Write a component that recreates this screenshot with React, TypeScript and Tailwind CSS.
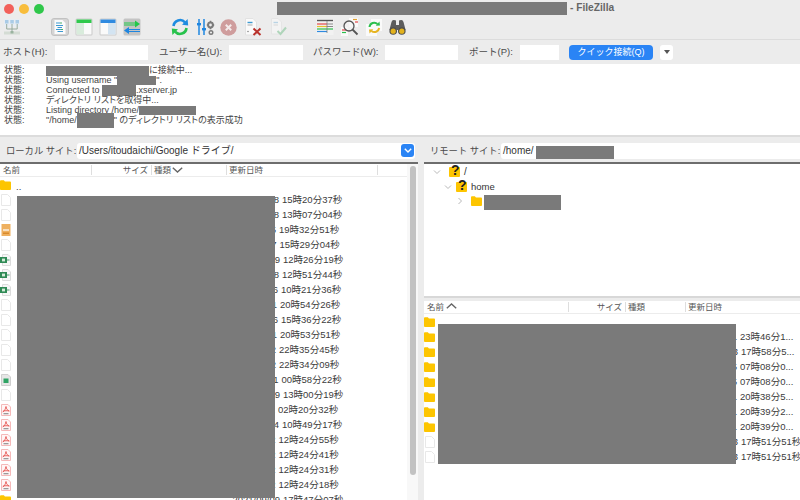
import React from "react";

const Redact = ({ c }: { c: string }) => <div className={`absolute bg-[#7a7a7a] ${c}`} />;

const Folder = () => (
  <svg width="11" height="10" viewBox="0 0 12 10" preserveAspectRatio="none" className="shrink-0">
    <path d="M0 1.2Q0 .2 1 .2H4.2L5.4 1.4H11Q12 1.4 12 2.4V9Q12 10 11 10H1Q0 10 0 9Z" fill="#fdc500" />
  </svg>
);
const Blank = () => (
  <svg width="10" height="12" viewBox="0 0 10 12" className="shrink-0 ml-[1px]">
    <path d="M.5.5H6.5L9.5 3.5V11.5H.5Z" fill="#fff" stroke="#e8e8e8" />
  </svg>
);
const Orange = () => (
  <svg width="10" height="12" viewBox="0 0 10 12" className="shrink-0 ml-[1px]">
    <rect width="9" height="12" x=".5" fill="#eeb060" />
    <rect x="2" y="5" width="6" height="2" fill="#fff" opacity=".6" />
    <rect x="2" y="8.5" width="6" height="1.5" fill="#d98a2a" />
  </svg>
);
const Xls = () => (
  <svg width="11" height="12" viewBox="0 0 11 12" className="shrink-0">
    <path d="M2.5.5H8L10.5 3V11.5H2.5Z" fill="#f6f6f6" stroke="#dcdcdc" />
    <rect x="0" y="3" width="7" height="6" fill="#2f8a55" />
    <rect x="2" y="4.6" width="3" height="2.8" fill="#d5ead9" />
    <rect x="7" y="5.5" width="2.5" height="1" fill="#4aa070" />
  </svg>
);
const Sheet = () => (
  <svg width="10" height="12" viewBox="0 0 10 12" className="shrink-0 ml-[1px]">
    <path d="M.5.5H7L9.5 3V11.5H.5Z" fill="#e6e6e6" stroke="#cfcfcf" />
    <rect x="2.5" y="4.5" width="5" height="4.5" fill="#2fa364" />
  </svg>
);
const Pdf = () => (
  <svg width="10" height="12" viewBox="0 0 10 12" className="shrink-0 ml-[1px]">
    <path d="M.5.5H7L9.5 3V11.5H.5Z" fill="#fff5f5" stroke="#f5b9b9" />
    <path d="M5 2.5C4.5 5 3.5 7 1.8 8M5 2.5C5.3 5 6.5 6.5 8.3 7M1.8 7.2C4 6.6 6 6.6 8.3 7" fill="none" stroke="#e5544f" strokeWidth=".9" />
    <rect x="2.5" y="9" width="5" height="1.3" fill="#999" />
  </svg>
);
const Question = () => (
  <div className="w-[11px] h-[10px] bg-[#fdc500] rounded-[1px] relative shrink-0">
    <span className="absolute left-[2px] -top-[5px] text-[14px] leading-[16px] font-bold text-[#222]">?</span>
  </div>
);

const Chevron = ({ d, c }: { d: string; c: string }) => (
  <svg width="8" height="8" viewBox="0 0 8 8" className={`shrink-0 ${c}`}>
    <path d={d} fill="none" stroke="#b9b9b9" strokeWidth="1" />
  </svg>
);

/* toolbar icons */
const SiteIcon = () => (
  <svg width="18" height="18" viewBox="0 0 18 18">
    <rect x="1" y="1" width="16" height="8" fill="#e7edf3" />
    <rect x="2" y="2" width="3.5" height="3.5" fill="#a9cbe6" />
    <rect x="7.3" y="2" width="3.5" height="3.5" fill="#a9cbe6" />
    <rect x="12.5" y="2" width="3.5" height="3.5" fill="#a9cbe6" />
    <path d="M3.7 6V11H14.2V6M9 6V14" stroke="#8fa596" strokeWidth=".9" fill="none" />
    <rect x="1" y="13.5" width="16" height="3" fill="#d4dcd4" />
    <rect x="7.5" y="13" width="3" height="2.5" fill="#9ab39f" />
  </svg>
);
const LogIcon = () => (
  <svg width="18" height="18" viewBox="0 0 18 18">
    <rect x=".5" y=".5" width="17" height="17" rx="2.5" fill="#d5d5d5" stroke="#c2c2c2" />
    <path d="M3.5 2H11.5L14.5 5V16H3.5Z" fill="#fbfbfb" />
    <path d="M5 5H9M5 7.5H12M6.5 9.5H11M5 11.5H10M6.5 13.5H12" stroke="#3d9ad1" strokeWidth="1" />
    <path d="M9 5H11M10 11.5H12" stroke="#45ad68" strokeWidth="1" />
  </svg>
);
const PaneIcon = ({ top, side, right }: { top: string; side: string; right?: boolean }) => (
  <svg width="18" height="18" viewBox="0 0 18 18">
    <rect x=".5" y=".5" width="17" height="17" rx="1.5" fill="#c9c9c9" />
    <rect x="1.5" y="1.5" width="15" height="15" fill="#fafafa" />
    <rect x="1.5" y="1.5" width="15" height="3.5" fill={top} />
    {right ? (
      <rect x="9" y="5" width="7.5" height="11.5" fill={side} />
    ) : (
      <rect x="1.5" y="5" width="7.5" height="11.5" fill={side} />
    )}
  </svg>
);
const TransferIcon = () => (
  <svg width="18" height="18" viewBox="0 0 18 18">
    <rect x=".5" y=".5" width="17" height="17" rx="1.5" fill="#c4c4c4" />
    <path d="M1 5H13M1 7H13" stroke="#23c84a" strokeWidth="1.2" />
    <path d="M12 2.5L17 6L12 9.5Z" fill="#23c84a" />
    <path d="M5 11.5H17M5 13.5H17" stroke="#1f86e0" strokeWidth="1.2" />
    <path d="M6 9L1 12.5L6 16Z" fill="#1f86e0" />
  </svg>
);
const RefreshIcon = () => (
  <svg width="18" height="18" viewBox="0 0 18 18">
    <path d="M2.5 8A6.6 6.6 0 0 1 14 4.3" fill="none" stroke="#1e8ce0" strokeWidth="2.6" />
    <path d="M11 6.8L17.2 7.4L16.6 1Z" fill="#1e8ce0" />
    <path d="M15.5 10A6.6 6.6 0 0 1 4 13.7" fill="none" stroke="#27c24c" strokeWidth="2.6" />
    <path d="M7 11.2L.8 10.6L1.4 17Z" fill="#27c24c" />
  </svg>
);
const QueueIcon = () => (
  <svg width="22" height="18" viewBox="0 0 22 18">
    <path d="M3 1V17M8 1V17" stroke="#1f86e0" strokeWidth="1.5" />
    <rect x="1" y="5" width="4" height="2.4" fill="#1f86e0" />
    <rect x="6" y="10" width="4" height="2.4" fill="#1f86e0" />
    <circle cx="14.5" cy="7" r="2.4" fill="none" stroke="#7a7a7a" strokeWidth="2" />
    <path d="M14.5 2.8V4M14.5 10V11.2M10.8 7H12M17 7H18.2" stroke="#7a7a7a" strokeWidth="1.6" />
    <circle cx="15" cy="14.5" r="1.8" fill="none" stroke="#7a7a7a" strokeWidth="1.4" />
  </svg>
);
const CancelIcon = () => (
  <svg width="17" height="17" viewBox="0 0 17 17">
    <circle cx="8.5" cy="8.5" r="8.2" fill="#cf9d9d" />
    <path d="M5.8 5.8L11.2 11.2M11.2 5.8L5.8 11.2" stroke="#f4eaea" strokeWidth="2" />
  </svg>
);
const DocX = () => (
  <svg width="18" height="18" viewBox="0 0 18 18">
    <path d="M1.5.5H9L12.5 4V17H1.5Z" fill="#fafafa" stroke="#e2e2e2" />
    <path d="M3.5 4.5H8.5" stroke="#3d9ad1" strokeWidth="1.4" />
    <path d="M3.5 7H8.5" stroke="#aaa" strokeWidth="1" />
    <circle cx="4" cy="13.5" r=".8" fill="#888" />
    <path d="M9.5 10.5L16.5 17M16.5 10.5L9.5 17" stroke="#b9322c" strokeWidth="2" />
  </svg>
);
const DocCheck = () => (
  <svg width="18" height="18" viewBox="0 0 18 18" opacity=".65">
    <path d="M2.5.5H9L12.5 4V16H2.5Z" fill="#f8f8f8" stroke="#e2e2e2" />
    <path d="M4.5 4.5H9" stroke="#9fc6e0" strokeWidth="1.4" />
    <path d="M4.5 7H9" stroke="#ccc" strokeWidth="1" />
    <path d="M8.5 13L11.5 16L17 9.5" fill="none" stroke="#8fc9a0" strokeWidth="2" />
  </svg>
);
const FilterIcon = () => (
  <svg width="18" height="18" viewBox="0 0 18 18">
    <rect x=".5" y="1" width="17" height="16" fill="#f2f2f2" />
    <path d="M1 2.5H17" stroke="#555" strokeWidth="1.4" />
    <path d="M1 6H11" stroke="#e4484a" strokeWidth="1.2" />
    <path d="M1 8.5H11" stroke="#e6c22e" strokeWidth="1.2" />
    <path d="M1 11H11" stroke="#2cbf4e" strokeWidth="1.2" />
    <path d="M1 13.5H11" stroke="#2f8ae0" strokeWidth="1.2" />
    <path d="M11 6H17M11 8.5H17" stroke="#8a8a8a" strokeWidth="1" />
    <path d="M11 11H17" stroke="#2cbf4e" strokeWidth="1.2" />
    <path d="M11 3V15" stroke="#777" strokeWidth=".7" />
  </svg>
);
const SearchIcon = () => (
  <svg width="18" height="18" viewBox="0 0 18 18">
    <rect x="8" y="0" width="9" height="9" fill="#fafafa" />
    <path d="M12 1.5H16" stroke="#e0a030" strokeWidth="1.2" />
    <path d="M14 4H17" stroke="#e4484a" strokeWidth="1.2" />
    <rect x="0" y="9" width="7" height="9" fill="#fafafa" />
    <path d="M1 12H5" stroke="#e4484a" strokeWidth="1.2" />
    <path d="M1 14.5H5" stroke="#2cbf4e" strokeWidth="1.2" />
    <circle cx="8" cy="8" r="5" fill="#f3f3f3" fillOpacity=".7" stroke="#555" strokeWidth="1.3" />
    <path d="M11.5 11.5L16.5 16.5" stroke="#555" strokeWidth="1.8" />
  </svg>
);
const SyncIcon = () => (
  <svg width="17" height="17" viewBox="0 0 17 17">
    <rect x="5" y="0" width="11" height="12" fill="#fafafa" />
    <rect x="0" y="5" width="11" height="12" fill="#fafafa" />
    <path d="M3.5 8A4.8 4.8 0 0 1 11.5 5" fill="none" stroke="#2cbf4e" strokeWidth="2" />
    <path d="M9.8 6.8L14 6.6L13.4 2.6Z" fill="#2cbf4e" />
    <path d="M13.2 9A4.8 4.8 0 0 1 5.5 12" fill="none" stroke="#e6b422" strokeWidth="2" />
    <path d="M7.2 10.2L3 10.4L3.6 14.4Z" fill="#e6b422" />
  </svg>
);
const BinocIcon = () => (
  <svg width="17" height="17" viewBox="0 0 17 17">
    <path d="M2.5 3Q3 .8 5 1L7 1.5V6H10V1.5L12 1Q14 .8 14.5 3L16.6 11H.4Z" fill="#5c5c5c" />
    <circle cx="4.2" cy="12" r="3.8" fill="#4d4d4d" />
    <circle cx="12.8" cy="12" r="3.8" fill="#4d4d4d" />
    <circle cx="4.2" cy="12.2" r="2.6" fill="#e3b21c" />
    <circle cx="12.8" cy="12.2" r="2.6" fill="#e3b21c" />
    <rect x="7" y="7" width="3" height="4" fill="#5c5c5c" />
  </svg>
);

const Inline = ({ c }: { c: string }) => <span className={`inline-block align-middle bg-[#7a7a7a] ${c}`} />;

const logs: React.ReactNode[] = [
  <><Inline c="w-[103px] h-[10px]" />に接続中...</>,
  <>Using username "<Inline c="w-[39px] h-[9px]" />".</>,
  <>Connected to <Inline c="w-[34px] h-[11px]" />.xserver.jp</>,
  <>ディレクトリ リストを取得中...</>,
  <>Listing directory /home/<Inline c="w-[57px] h-[9px]" /></>,
  <>"/home/<Inline c="w-[37px] h-[15px] -my-[3px]" />" のディレクトリ リストの表示成功</>,
];

type T = [string, string, number];
const leftRows: { icon: React.ReactNode; t?: T }[] = [
  { icon: <Blank />, t: ["2021/01/18", "15時20分37秒", 282] },
  { icon: <Blank />, t: ["2021/01/18", "13時07分04秒", 282] },
  { icon: <Orange />, t: ["2021/02/05", "19時32分51秒", 279] },
  { icon: <Blank />, t: ["2021/02/07", "15時29分04秒", 279.5] },
  { icon: <Xls />, t: ["2021/03/19", "12時26分19秒", 283] },
  { icon: <Xls />, t: ["2021/03/18", "12時51分44秒", 282] },
  { icon: <Xls />, t: ["2021/03/16", "10時21分36秒", 281] },
  { icon: <Blank />, t: ["2021/04/11", "20時54分26秒", 280] },
  { icon: <Blank />, t: ["2021/04/16", "15時36分22秒", 281] },
  { icon: <Blank />, t: ["2021/04/11", "20時53分51秒", 280] },
  { icon: <Blank />, t: ["2021/05/02", "22時35分45秒", 279] },
  { icon: <Blank />, t: ["2021/05/02", "22時34分09秒", 279] },
  { icon: <Sheet />, t: ["2021/06/01", "00時58分22秒", 281.5] },
  { icon: <Blank />, t: ["2021/06/19", "13時00分19秒", 283] },
  { icon: <Pdf />, t: ["2021/07/02", "02時20分32秒", 278] },
  { icon: <Pdf />, t: ["2021/07/14", "10時49分17秒", 282] },
  { icon: <Pdf />, t: ["2021/08/02", "12時24分55秒", 278.5] },
  { icon: <Pdf />, t: ["2021/08/02", "12時24分41秒", 278.5] },
  { icon: <Pdf />, t: ["2021/08/02", "12時24分31秒", 278.5] },
  { icon: <Pdf />, t: ["2021/08/02", "12時24分18秒", 278.5] },
  { icon: <Folder />, t: ["2021/09/09", "17時47分07秒", 283] },
];
const rightRows: { icon: React.ReactNode; t?: T }[] = [
  { icon: <Folder />, t: ["2021/01/11", "23時46分1...", 740] },
  { icon: <Folder />, t: ["2021/01/13", "17時58分5...", 741] },
  { icon: <Folder />, t: ["2021/02/15", "07時08分0...", 740] },
  { icon: <Folder />, t: ["2021/02/15", "07時08分0...", 740] },
  { icon: <Folder />, t: ["2021/03/11", "20時38分5...", 740] },
  { icon: <Folder />, t: ["2021/03/11", "20時39分2...", 740] },
  { icon: <Folder />, t: ["2021/03/11", "20時39分0...", 740] },
  { icon: <Blank />, t: ["2021/04/13", "17時51分51秒", 741] },
  { icon: <Blank />, t: ["2021/04/13", "17時51分51秒", 741] },
];

const Row = ({
  icon, name, t, iconW, dateX, nameW,
}: { icon: React.ReactNode; name?: string; t?: T; iconW: string; dateX: number; nameW: string }) => (
  <div className="h-[15.03px] shrink-0 flex items-center whitespace-nowrap">
    <div className={`${iconW} flex items-center shrink-0`}>{icon}</div>
    <div className={`${nameW} shrink-0 pt-[4px]`}>{name}</div>
    {t && (
      <div className="flex">
        <span className="flex justify-end mr-[3px]" style={{ width: t[2] - dateX - 3 }}>{t[0]}</span>
        <span>{t[1]}</span>
      </div>
    )}
  </div>
);

const Sep = ({ c }: { c: string }) => <div className={`absolute top-[1px] h-[10px] w-px bg-[#dedede] ${c}`} />;

const SortChevron = ({ up, c }: { up?: boolean; c: string }) => (
  <svg width="11" height="6" viewBox="0 0 11 6" className={`absolute ${c}`}>
    <path d={up ? "M.8 5.2L5.5 1L10.2 5.2" : "M.8 .8L5.5 5L10.2 .8"} fill="none" stroke="#666" strokeWidth="1.4" />
  </svg>
);

export default function App() {
  return (
    <div className="w-[800px] h-[500px] overflow-hidden flex flex-col bg-[#ececec] text-[9.5px] leading-[12px] text-[#3c3c3c] [font-family:'Liberation_Sans','Noto_Sans_CJK_JP',sans-serif]">
      {/* title bar */}
      <div className="h-[17px] shrink-0 relative flex items-center pl-[4px] gap-[5px]">
        <div className="w-[10px] h-[10px] rounded-full bg-[#f2605a]" />
        <div className="w-[10px] h-[10px] rounded-full bg-[#f8bd3c]" />
        <div className="w-[10px] h-[10px] rounded-full bg-[#2fc74a]" />
        <Redact c="left-[277px] top-[2px] w-[290px] h-[13px]" />
        <span className="absolute left-[570px] top-[1px] text-[10.2px] leading-[13px] font-bold text-[#666]">- FileZilla</span>
      </div>
      {/* toolbar */}
      <div className="h-[23px] shrink-0 flex items-center pb-[2px] border-b border-[#dcdcdc]">
        <div className="ml-[3px]"><SiteIcon /></div>
        <div className="ml-[30px]"><LogIcon /></div>
        <div className="ml-[6px]"><PaneIcon top="#2fc94c" side="#d9ecdc" /></div>
        <div className="ml-[6px]"><PaneIcon top="#2f8ae0" side="#d3e4f2" right /></div>
        <div className="ml-[6px]"><TransferIcon /></div>
        <div className="ml-[30px]"><RefreshIcon /></div>
        <div className="ml-[7px]"><QueueIcon /></div>
        <div className="ml-[2px]"><CancelIcon /></div>
        <div className="ml-[7px]"><DocX /></div>
        <div className="ml-[7px]"><DocCheck /></div>
        <div className="ml-[29px]"><FilterIcon /></div>
        <div className="ml-[7px]"><SearchIcon /></div>
        <div className="ml-[7px]"><SyncIcon /></div>
        <div className="ml-[6px]"><BinocIcon /></div>
      </div>
      {/* quick connect */}
      <div className="h-[24px] shrink-0 flex items-center text-[#4a4a4a] whitespace-nowrap">
        <span className="ml-[3px] w-[52px]">ホスト(H):</span>
        <div className="w-[93px] h-[15px] bg-white" />
        <span className="ml-[11px] w-[70px]">ユーザー名(U):</span>
        <div className="w-[74px] h-[15px] bg-white" />
        <span className="ml-[10px] w-[72px]">パスワード(W):</span>
        <div className="w-[73px] h-[15px] bg-white" />
        <span className="ml-[11px] w-[51px]">ポート(P):</span>
        <div className="w-[39px] h-[15px] bg-white" />
        <button className="ml-[10px] w-[84px] h-[15px] rounded-[4px] bg-[#2a84f5] text-white text-[9px] leading-[15px] text-center">クイック接続(Q)</button>
        <div className="ml-[7px] w-[13px] h-[15px] rounded-[3px] bg-white flex items-center justify-center">
          <div className="w-0 h-0 border-l-[3.5px] border-r-[3.5px] border-t-[4px] border-l-transparent border-r-transparent border-t-[#555]" />
        </div>
      </div>
      {/* log */}
      <div className="h-[71px] shrink-0 bg-white pt-[1px] text-[#444] text-[9px] leading-[10px] whitespace-pre [font-feature-settings:'palt']">
        {logs.map((m, i) => (
          <div key={i} className="flex h-[10px]">
            <span className="ml-[4px] w-[42px]">状態:</span>
            <span>{m}</span>
          </div>
        ))}
      </div>
      <div className="h-[2px] shrink-0 bg-[#dcdcdc]" />
      {/* panels */}
      <div className="flex-1 min-h-0 flex pt-[3px] bg-[#ececec]">
        {/* local */}
        <div className="w-[418px] shrink-0 flex flex-col">
          <div className="h-[24px] shrink-0 flex items-center border-b-2 border-[#6d6d6d] text-[#4a4a4a] pb-[1px]">
            <span className="ml-[6px] w-[71px] whitespace-nowrap text-[9.3px]">ローカル サイト:</span>
            <div className="w-[338px] h-[16px] bg-white rounded-[3px] flex items-center pl-[2px] pr-[1px] justify-between text-[10px] text-[#333] whitespace-nowrap">
              <span>/Users/itoudaichi/Google ドライブ/</span>
              <div className="w-[13px] h-[13px] rounded-[3px] bg-[#2a84f5] flex items-center justify-center">
                <svg width="8" height="5" viewBox="0 0 8 5"><path d="M.8 .8L4 4L7.2 .8" fill="none" stroke="#fff" strokeWidth="1.4" /></svg>
              </div>
            </div>
          </div>
          <div className="flex-1 min-h-0 flex bg-white">
            <div className="w-[407px] shrink-0 flex flex-col relative overflow-hidden">
              <div className="h-[13px] shrink-0 relative border-b border-[#ececec] text-[#555] text-[8.5px] leading-[13px] whitespace-nowrap">
                <span className="absolute left-[3px]">名前</span>
                <Sep c="left-[91px]" />
                <span className="absolute right-[259px]">サイズ</span>
                <Sep c="left-[151px]" />
                <span className="absolute left-[154px]">種類</span>
                <SortChevron c="left-[172px] top-[3px]" />
                <Sep c="left-[226px]" />
                <span className="absolute left-[229px]">更新日時</span>
                <Sep c="left-[377px]" />
              </div>
              <Row icon={<Folder />} name=".." iconW="w-[16px]" nameW="w-[214px]" dateX={229} />
              {leftRows.map((r, i) => (
                <Row key={i} icon={r.icon} name="" t={r.t} iconW="w-[15px]" nameW="w-[214px]" dateX={229} />
              ))}
              <Redact c="left-[17px] top-[32px] w-[258px] h-[302px]" />
            </div>
            <div className="flex-1 bg-[#f8f8f8] flex justify-center pt-[2px] pl-[2px] pr-[1px]">
              <div className="w-[6px] h-[309px] rounded-full bg-[#c2c2c2]" />
            </div>
          </div>
        </div>
        {/* divider */}
        <div className="w-[6px] shrink-0" />
        {/* remote */}
        <div className="flex-1 min-w-0 flex flex-col">
          <div className="h-[24px] shrink-0 flex items-center border-b-2 border-[#6d6d6d] text-[#4a4a4a] pb-[1px]">
            <span className="ml-[6px] w-[71px] whitespace-nowrap text-[9.3px]">リモート サイト:</span>
            <div className="flex-1 h-[16px] bg-white rounded-l-[3px] flex items-center pl-[2px] text-[10px] text-[#333] relative">
              <span>/home/</span>
              <Redact c="left-[35px] top-[3px] w-[78px] h-[13px]" />
            </div>
          </div>
          <div className="h-[134px] shrink-0 bg-white border-b-2 border-[#d8d8d8] relative pt-[1px] text-[#333]">
            <div className="h-[14.5px] flex items-center pl-[9px]">
              <Chevron c="mr-[8px]" d="M1 2.5L4 5.5L7 2.5" />
              <Question />
              <span className="ml-[4px] text-[10px]">/</span>
            </div>
            <div className="h-[14.5px] flex items-center pl-[20px]">
              <Chevron c="mr-[4px]" d="M1 2.5L4 5.5L7 2.5" />
              <Question />
              <span className="ml-[4px]">home</span>
            </div>
            <div className="h-[14.5px] flex items-center pl-[32px]">
              <Chevron c="mr-[7px]" d="M2.5 1L5.5 4L2.5 7" />
              <Folder />
            </div>
            <Redact c="left-[60px] top-[31px] w-[77px] h-[15px]" />
          </div>
          <div className="h-[3px] shrink-0" />
          <div className="flex-1 min-h-0 bg-white relative overflow-hidden flex flex-col">
            <div className="h-[13px] shrink-0 relative border-b border-[#ececec] text-[#555] text-[8.5px] leading-[13px] whitespace-nowrap">
              <span className="absolute left-[3px]">名前</span>
              <SortChevron up c="left-[22px] top-[2px]" />
              <Sep c="left-[144px]" />
              <span className="absolute right-[178px]">サイズ</span>
              <Sep c="left-[201px]" />
              <span className="absolute left-[204px]">種類</span>
              <Sep c="left-[261px]" />
              <span className="absolute left-[264px]">更新日時</span>
            </div>
            <Row icon={<Folder />} name="" iconW="w-[14px]" nameW="w-[250px]" dateX={688} />
            {rightRows.map((r, i) => (
              <Row key={i} icon={r.icon} name="" t={r.t} iconW="w-[14px]" nameW="w-[250px]" dateX={688} />
            ))}
            <Redact c="left-[14px] top-[23px] w-[298px] h-[140px]" />
          </div>
        </div>
      </div>
    </div>
  );
}
